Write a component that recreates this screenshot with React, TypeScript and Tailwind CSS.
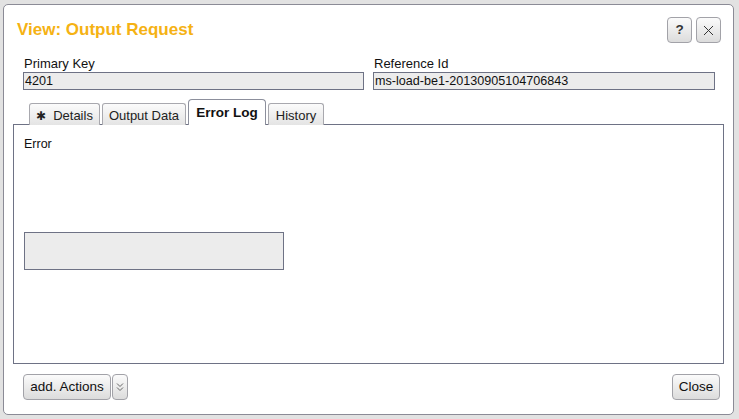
import React from "react";

const font = { fontFamily: '"Liberation Sans", Arial, sans-serif' };

function Tab({ label, active, icon, w }: { label: string; active?: boolean; icon?: boolean; w: string }) {
  if (active) {
    return (
      <div className={"relative z-10 flex h-[26px] items-center justify-center rounded-t-[4px] border border-b-0 border-[#8c8f9c] bg-white pt-[1px] text-[13.5px] font-bold text-[#111] " + w}>
        {label}
      </div>
    );
  }
  return (
    <div className={"mt-[3px] flex h-[22px] items-center justify-center rounded-t-[3px] border border-b-0 border-[#a8a8ae] bg-gradient-to-b from-[#fbfbfb] to-[#e4e4e4] pt-[2px] text-[13px] text-[#222] " + w}>
      {icon && <span className="mr-[7px] text-[12px] leading-none" style={{ fontFamily: '"DejaVu Sans", sans-serif' }}>✱</span>}
      {label}
    </div>
  );
}

function Btn({ children, className = "" }: { children: React.ReactNode; className?: string }) {
  return (
    <div
      className={
        "flex h-[26px] items-center justify-center rounded-[4px] border border-[#a2a2a8] bg-gradient-to-b from-[#fbfbfb] to-[#dcdcdc] text-[13.5px] text-[#111] " +
        className
      }
    >
      {children}
    </div>
  );
}

export default function App() {
  return (
    <div className="h-[419px] w-[739px] bg-[#e2e2e2] pl-[3px] pt-[4px]" style={font}>
      <div className="flex h-[411px] w-[731px] flex-col rounded-[5px] border border-[#8b8b96] bg-white">
        {/* title */}
        <div className="flex items-start pl-[13px] pr-[12px] pt-[12px]">
          <div className="mt-[3px] flex-1 text-[17px] font-bold leading-[20px] text-[#f5b214]">View: Output Request</div>
          <div className="flex gap-[4px]">
            <Btn className="w-[25px] font-bold text-[#333]">?</Btn>
            <Btn className="w-[25px]">
              <svg width="11" height="11" viewBox="0 0 11 11">
                <path d="M1 1L10 10M10 1L1 10" stroke="#333" strokeWidth="1" />
              </svg>
            </Btn>
          </div>
        </div>
        {/* fields */}
        <div className="mt-[13px] flex gap-[9px] pl-[19px] pr-[18px]">
          <div className="w-[342px]">
            <div className="h-[16px] pl-[1px] text-[13px] leading-[16px] text-[#111]">Primary Key</div>
            <div className="h-[18px] border border-[#6e7285] bg-[#ececec] pl-[1px] text-[12.6px] leading-[16px] text-[#111]">4201</div>
          </div>
          <div className="w-[343px]">
            <div className="h-[16px] pl-[1px] text-[13px] leading-[16px] text-[#111]">Reference Id</div>
            <div className="h-[18px] border border-[#6e7285] bg-[#ececec] pl-[1px] text-[12.6px] leading-[16px] text-[#111]">ms-load-be1-20130905104706843</div>
          </div>
        </div>
        {/* tabs */}
        <div className="mx-[9px] mt-[9px] flex flex-1 flex-col">
          <div className="relative z-10 -mb-px flex items-end gap-[2px] pl-[16px]">
            <Tab label="Details" icon w="w-[71px]" />
            <Tab label="Output Data" w="w-[84px]" />
            <Tab label="Error Log" active w="w-[78px]" />
            <Tab label="History" w="w-[56px]" />
          </div>
          <div className="h-[240px] border border-[#6e7285] px-[10px] pt-[10px]">
            <div className="text-[12.5px] text-[#111]">Error</div>
            <div className="mt-[78px] h-[38px] w-[260px] border border-[#6e7285] bg-[#ececec]" />
          </div>
        </div>
        {/* footer */}
        <div className="flex items-center pb-[14px] pl-[19px] pr-[13px]">
          <Btn className="w-[88px]">add. Actions</Btn>
          <Btn className="ml-px w-[16px] rounded-[4px]">
            <svg width="8" height="12" viewBox="0 0 8 12">
              <path d="M1 2.5L4 5.5L7 2.5M1 6.5L4 9.5L7 6.5" stroke="#666" strokeWidth="1" fill="none" />
            </svg>
          </Btn>
          <div className="flex-1" />
          <Btn className="w-[48px]">Close</Btn>
        </div>
      </div>
    </div>
  );
}
